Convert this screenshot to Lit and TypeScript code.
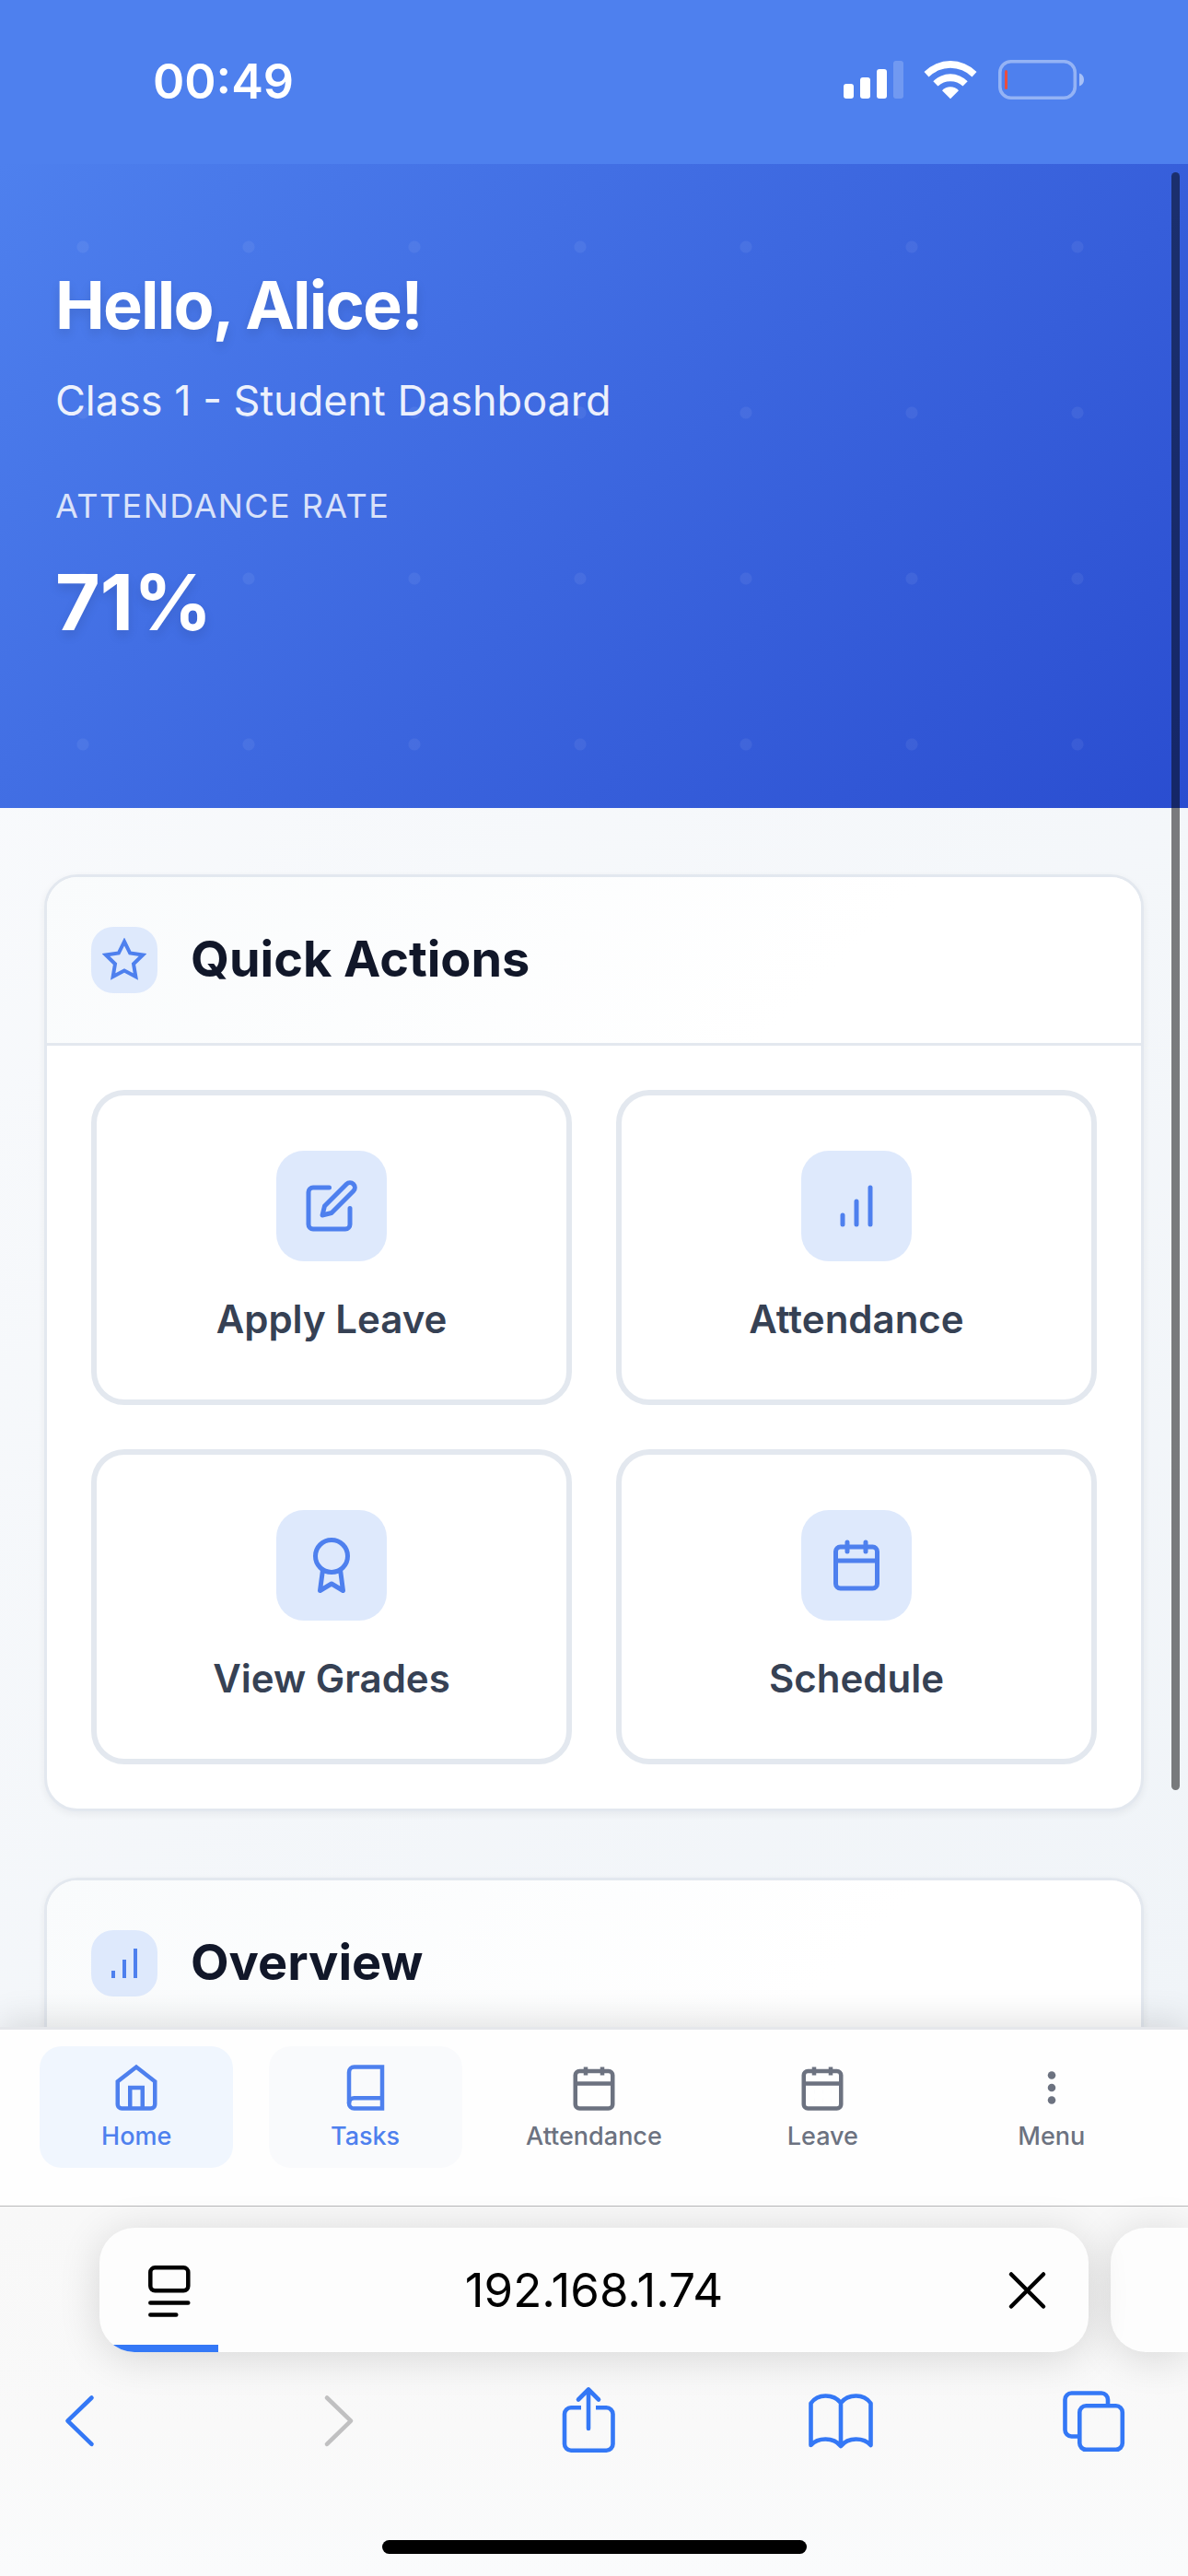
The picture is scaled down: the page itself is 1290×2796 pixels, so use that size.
import { LitElement, html, css, svg, TemplateResult, SVGTemplateResult } from "lit";
import { customElement, property, state } from "lit/decorators.js";
import { classMap } from "lit/directives/class-map.js";

const glyphs: Record<string, SVGTemplateResult> = {
  star: svg`<polygon points="12 2 15.09 8.26 22 9.27 17 14.14 18.18 21.02 12 17.77 5.82 21.02 7 14.14 2 9.27 8.91 8.26 12 2" />`,
  edit: svg`<path d="M11 4H4a2 2 0 0 0-2 2v14a2 2 0 0 0 2 2h14a2 2 0 0 0 2-2v-7" /><path d="M18.5 2.5a2.121 2.121 0 0 1 3 3L12 15l-4 1 1-4 9.5-9.5z" />`,
  bars: svg`<path d="M12 20V10M18 20V4M6 20v-4" />`,
  award: svg`<circle cx="12" cy="8" r="7" /><polyline points="8.21 13.89 7 23 12 20 17 23 15.79 13.88" />`,
  calendar: svg`<rect x="3" y="4" width="18" height="18" rx="2" /><path d="M16 2v4M8 2v4M3 10h18" />`,
  calendarDays: svg`<rect x="3" y="4" width="18" height="18" rx="2" /><path d="M16 2v4M8 2v4M3 10h18" /><path d="M8 14h.01M12 14h.01M16 14h.01M8 18h.01M12 18h.01M16 18h.01" />`,
  home: svg`<path d="M3 9l9-7 9 7v11a2 2 0 0 1-2 2H5a2 2 0 0 1-2-2z" /><polyline points="9 22 9 12 15 12 15 22" />`,
  book: svg`<path d="M4 19.5A2.5 2.5 0 0 1 6.5 17H20" /><path d="M6.5 2H20v20H6.5A2.5 2.5 0 0 1 4 19.5v-15A2.5 2.5 0 0 1 6.5 2z" />`,
  dots: svg`<g fill="currentColor" stroke="none"><circle cx="12" cy="6" r="1.9" /><circle cx="12" cy="12" r="1.9" /><circle cx="12" cy="18" r="1.9" /></g>`,
};

const icon = (name: string, cls: string): TemplateResult =>
  html`<svg class=${cls} viewBox="0 0 24 24" aria-hidden="true">${glyphs[name]}</svg>`;

/* Clock, signal, wi-fi and battery. */
@customElement("status-bar")
export class StatusBar extends LitElement {
  static styles = css`
    :host {
      display: flex;
      flex: none;
      align-items: center;
      justify-content: space-between;
      box-sizing: border-box;
      height: 178px;
      padding: 0 113px 0 166px;
      background: #4e80ee;
      color: #fff;
    }
    .time {
      font-size: 52px;
      line-height: 64px;
      font-weight: 600;
    }
    .icons {
      display: flex;
      align-items: center;
      gap: 22px;
      padding-bottom: 4px;
    }
    .icons svg {
      display: block;
      height: 44px;
    }
  `;
  render() {
    return html`
      <time class="time">00:49</time>
      <div class="icons">
        <svg width="65" viewBox="0 0 65 44" fill="#fff" role="img" aria-label="Signal">
          <rect x="0" y="26" width="11" height="16" rx="3" />
          <rect x="18" y="19" width="11" height="23" rx="3" />
          <rect x="36" y="10" width="11" height="32" rx="3" />
          <rect x="54" y="1" width="11" height="41" rx="3" opacity=".2" />
        </svg>
        <svg width="58" viewBox="0 0 58 44" fill="#fff" role="img" aria-label="Wi-Fi">
          <path d="M.5 13A40 40 0 0 1 57.5 13L52.5 18.5A33.5 33.5 0 0 0 5.5 18.5Z" />
          <path d="M10.3 23.3A26 26 0 0 1 47.7 23.3L42.5 28.6A20 20 0 0 0 15.5 28.6Z" />
          <path d="M20 33.3A12 12 0 0 1 38 33.3L29 42.3Z" />
        </svg>
        <svg width="94" viewBox="0 0 94 44" role="img" aria-label="Battery low">
          <rect x="2.8" y="1.8" width="81.5" height="39.5" rx="12" fill="none" stroke="#fff" stroke-opacity=".4" stroke-width="3.6" />
          <path d="M89 14.5c3 1 5 3.6 5 7s-2 6-5 7z" fill="#fff" fill-opacity=".5" />
          <rect x="8" y="11" width="3" height="21" rx="1.5" fill="#eb4d3d" />
        </svg>
      </div>
    `;
  }
}

/* Titled panel with an icon badge. */
@customElement("dash-card")
export class DashCard extends LitElement {
  @property() heading = "";
  @property() glyph = "";
  static styles = css`
    :host {
      display: block;
      border: 3px solid #e3e8ef;
      border-radius: 36px;
      background: #fff;
      box-shadow: 0 3px 9px rgba(15, 23, 42, 0.06);
      overflow: hidden;
    }
    .head {
      display: flex;
      align-items: center;
      gap: 36px;
      padding: 54px 48px;
      border-bottom: 3px solid #e3e8ef;
      background: linear-gradient(135deg, #f9fbfc 0%, #fff 70%);
    }
    .badge {
      display: grid;
      place-items: center;
      width: 72px;
      height: 72px;
      border-radius: 24px;
      background: #dee9fc;
      color: #4e80ee;
    }
    .glyph {
      width: 48px;
      height: 48px;
      fill: none;
      stroke: currentColor;
      stroke-width: 2;
    }
    h2 {
      margin: 0;
      padding-bottom: 2px;
      font-size: 54px;
      line-height: 68px;
      font-weight: 700;
      color: #111729;
    }
    .body {
      padding: 48px;
    }
  `;
  render() {
    return html`
      <div class="head">
        <span class="badge">${icon(this.glyph, "glyph")}</span>
        <h2>${this.heading}</h2>
      </div>
      <div class="body"><slot></slot></div>
    `;
  }
}

/* Browser chrome under the page: address field, toolbar, home indicator. */
@customElement("browser-chrome")
export class BrowserChrome extends LitElement {
  @property({ type: Number }) progress = 12;
  static styles = css`
    :host {
      display: block;
      flex: none;
      position: relative;
      border-top: 1px solid #b9b9bb;
      background: linear-gradient(#f8f8f8, #f9f9f9 60%, #fafbfc);
    }
    .strip {
      display: flex;
      gap: 24px;
      padding: 23px 0 0 108px;
    }
    .field,
    .next {
      height: 135px;
      background: #fdfdfd;
      box-shadow: 0 6px 45px rgba(0, 0, 0, 0.14);
    }
    .field {
      position: relative;
      flex: 1;
      min-width: 0;
      display: flex;
      align-items: center;
      justify-content: space-between;
      box-sizing: border-box;
      padding: 0 33px;
      border-radius: 38px;
    }
    .next {
      width: 84px;
      border-radius: 38px 0 0 38px;
    }
    .clip {
      position: absolute;
      inset: 0;
      border-radius: 38px;
      overflow: hidden;
      pointer-events: none;
    }
    .bar {
      position: absolute;
      left: 0;
      bottom: 0;
      height: 8px;
      background: #3478f6;
    }
    button {
      display: block;
      padding: 0;
      border: 0;
      background: none;
      color: inherit;
    }
    svg {
      display: block;
      fill: none;
      stroke: currentColor;
      stroke-linecap: round;
      stroke-linejoin: round;
    }
    .small {
      width: 66px;
      height: 66px;
      stroke-width: 4.5;
    }
    input {
      flex: 1;
      min-width: 0;
      padding: 0;
      border: 0;
      outline: 0;
      background: none;
      font: 400 51px/64px Inter, "Liberation Sans", sans-serif;
      color: #000;
      text-align: center;
    }
    .tools {
      display: flex;
      justify-content: space-between;
      padding: 37px 65px 91px 48px;
      color: #3478f6;
    }
    .tool {
      width: 76px;
      height: 76px;
      stroke-width: 4.6;
    }
    .tools button:disabled {
      color: #c0c0c1;
    }
    .indicator {
      width: 461px;
      height: 15px;
      margin: 0 auto;
      border-radius: 8px;
      background: #000;
    }
    .foot {
      padding-bottom: 24px;
    }
  `;
  render() {
    return html`
      <div class="strip">
        <div class="field">
          <button aria-label="Page settings">
            <svg class="small" viewBox="-9 0 66 66">
              <rect x="13.3" y="8.3" width="41" height="25" rx="5" />
              <path d="M13.3 46.5h41M13.3 59.5h28" />
            </svg>
          </button>
          <input type="text" aria-label="Address" value="192.168.1.74" />
          <button aria-label="Stop loading">
            <svg class="small" viewBox="0 0 66 66"><path d="M15 15.5l35 35M50 15.5l-35 35" /></svg>
          </button>
          <div class="clip"><div class="bar" style="width:${this.progress}%"></div></div>
        </div>
        <div class="next"></div>
      </div>
      <div class="tools">
        <button aria-label="Back">
          <svg class="tool" viewBox="0 0 76 76"><path d="M51.5 12.5 25.5 37.7 51.5 62.8" /></svg>
        </button>
        <button aria-label="Forward" disabled>
          <svg class="tool" viewBox="-7 0 76 76"><path d="M25 12.5 51 37.7 25 62.8" /></svg>
        </button>
        <button aria-label="Share">
          <svg class="tool" viewBox="-2 0 76 76">
            <path stroke-linecap="butt" d="M30 23.3H19a7 7 0 0 0-7 7V62.7a7 7 0 0 0 7 7H57.5a7 7 0 0 0 7-7V30.3a7 7 0 0 0-7-7H46" />
            <path d="M38 46V3.5M27 14.5 38 3.5 49 14.5" />
          </svg>
        </button>
        <button aria-label="Bookmarks">
          <svg class="tool" viewBox="-1 0 76 76">
            <path d="M38 18C34 13 28 10.5 21.5 10.5S9 13.5 5.5 18.5V64C9 60 15 57.5 21.5 57.5S34 60 38 65C42 60 48 57.5 54.5 57.5S67 60 70.5 64V18.5C67 13.5 61 10.5 54.5 10.5S42 13 38 18ZV65" />
          </svg>
        </button>
        <button aria-label="Tabs">
          <svg class="tool" viewBox="0 0 76 76">
            <path stroke-linecap="butt" d="M22 54.5H14.5a7 7 0 0 1-7-7V14.5a7 7 0 0 1 7-7H47a7 7 0 0 1 7 7V20" />
            <rect x="23.3" y="21.3" width="46.5" height="47.5" rx="7" />
          </svg>
        </button>
      </div>
      <div class="foot"><div class="indicator"></div></div>
    `;
  }
}

@customElement("app-root")
export class AppRoot extends LitElement {
  @state() private current = "Home";

  private actions = [
    { label: "Apply Leave", glyph: "edit" },
    { label: "Attendance", glyph: "bars" },
    { label: "View Grades", glyph: "award" },
    { label: "Schedule", glyph: "calendar" },
  ];

  private tabs = [
    { label: "Home", glyph: "home" },
    { label: "Tasks", glyph: "book", hover: true },
    { label: "Attendance", glyph: "calendar" },
    { label: "Leave", glyph: "calendarDays" },
    { label: "Menu", glyph: "dots" },
  ];

  static styles = css`
    :host {
      display: flex;
      flex-direction: column;
      height: 100vh;
      overflow: hidden;
      font-family: Inter, "Liberation Sans", sans-serif;
    }
    .page {
      position: relative;
      flex: 1;
      min-height: 0;
      display: flex;
    }
    .scroll {
      flex: 1;
      min-width: 0;
      overflow-y: auto;
      scrollbar-width: none;
      background: linear-gradient(135deg, #fafbfd, #f0f4f8);
    }
    .thumb {
      position: absolute;
      top: 9px;
      bottom: 257px;
      right: 9px;
      width: 9px;
      border-radius: 5px;
      background: rgba(0, 0, 0, 0.5);
    }
    .hero {
      padding: 108px 60px 173px;
      color: #fff;
      background:
        radial-gradient(circle at center, rgba(255, 255, 255, 0.06) 6px, transparent 7px) 0 0 / 180px 180px,
        linear-gradient(135deg, #4e80ee, #2a4dd0);
    }
    h1 {
      margin: 0 0 24px;
      font-size: 72px;
      line-height: 90px;
      font-weight: 700;
      letter-spacing: -0.025em;
      text-shadow: 0 6px 12px rgba(0, 0, 0, 0.1);
    }
    .sub {
      margin: 0 0 52px;
      font-size: 45px;
      line-height: 70px;
      opacity: 0.9;
    }
    .label {
      font-size: 36px;
      line-height: 54px;
      letter-spacing: 0.04em;
      text-transform: uppercase;
      opacity: 0.8;
    }
    .rate {
      margin-top: 28px;
      font-size: 84px;
      line-height: 100px;
      font-weight: 700;
      text-shadow: 0 6px 12px rgba(0, 0, 0, 0.1);
    }
    .content {
      display: flex;
      flex-direction: column;
      gap: 72px;
      padding: 72px 48px;
    }
    .actions {
      display: grid;
      grid-template-columns: 1fr 1fr;
      gap: 48px;
    }
    .action {
      display: flex;
      flex-direction: column;
      align-items: center;
      gap: 36px;
      padding: 60px 24px;
      border: 6px solid #e3e8ef;
      border-radius: 36px;
      background: #fff;
      color: #364154;
      font: 600 42px/54px Inter, "Liberation Sans", sans-serif;
    }
    .badge {
      display: grid;
      place-items: center;
      width: 120px;
      height: 120px;
      border-radius: 30px;
      background: #dee9fc;
      color: #4e80ee;
    }
    .glyph {
      width: 60px;
      height: 60px;
      fill: none;
      stroke: currentColor;
      stroke-width: 2;
      stroke-linecap: round;
      stroke-linejoin: round;
    }
    .stats {
      min-height: 300px;
    }
    .nav {
      position: relative;
      flex: none;
      display: flex;
      justify-content: space-around;
      padding: 18px 24px 41px;
      border-top: 3px solid #e5e7eb;
      background: #fefefe;
      box-shadow: 0 -6px 36px rgba(0, 0, 0, 0.12);
    }
    .tab {
      display: flex;
      flex-direction: column;
      align-items: center;
      gap: 9px;
      width: 210px;
      padding: 18px 0;
      border-radius: 24px;
      color: #6c7280;
      font-size: 27px;
      line-height: 33px;
      font-weight: 500;
      text-decoration: none;
    }
    .tab.hover {
      background: #f9fafc;
      color: #4e80ee;
    }
    .tab.on {
      background: #f0f6fe;
      color: #4e80ee;
    }
    .mark {
      display: block;
      width: 54px;
      height: 54px;
      fill: none;
      stroke: currentColor;
      stroke-width: 2;
    }
  `;

  private pick(e: Event, label: string) {
    e.preventDefault();
    this.current = label;
  }

  render() {
    return html`
      <status-bar></status-bar>
      <div class="page">
        <main class="scroll">
          <header class="hero">
            <h1>Hello, Alice!</h1>
            <p class="sub">Class 1 - Student Dashboard</p>
            <div class="label">Attendance Rate</div>
            <div class="rate">71%</div>
          </header>
          <div class="content">
            <dash-card heading="Quick Actions" glyph="star">
              <div class="actions">
                ${this.actions.map(
                  (a) => html`<button class="action">
                    <span class="badge">${icon(a.glyph, "glyph")}</span>
                    <span>${a.label}</span>
                  </button>`
                )}
              </div>
            </dash-card>
            <dash-card heading="Overview" glyph="bars">
              <div class="stats"></div>
            </dash-card>
          </div>
        </main>
        <div class="thumb"></div>
      </div>
      <nav class="nav" aria-label="Main">
        ${this.tabs.map(
          (t) => html`<a
            href="#${t.label.toLowerCase()}"
            class=${classMap({ tab: true, hover: !!t.hover, on: this.current === t.label })}
            @click=${(e: Event) => this.pick(e, t.label)}
          >
            ${icon(t.glyph, "mark")}
            <span>${t.label}</span>
          </a>`
        )}
      </nav>
      <browser-chrome></browser-chrome>
    `;
  }
}
